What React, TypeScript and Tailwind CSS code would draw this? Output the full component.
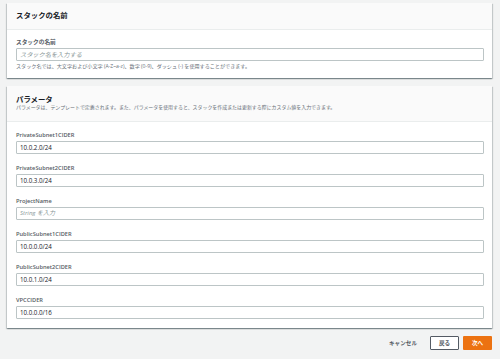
import React from 'react';

const font = { fontFamily: '"Open Sans", "Noto Sans CJK JP", sans-serif' };

type Param = { name: string; value?: string; placeholder?: string };

const params: Param[] = [
  { name: 'PrivateSubnet1CIDER', value: '10.0.2.0/24' },
  { name: 'PrivateSubnet2CIDER', value: '10.0.3.0/24' },
  { name: 'ProjectName', placeholder: 'String を入力' },
  { name: 'PublicSubnet1CIDER', value: '10.0.0.0/24' },
  { name: 'PublicSubnet2CIDER', value: '10.0.1.0/24' },
  { name: 'VPCCIDER', value: '10.0.0.0/16' },
];

function Field({ name, value, placeholder }: Param) {
  return (
    <div>
      <p className="text-[5.7px] leading-[8px] font-semibold text-[#545b64] mb-[2px]">{name}</p>
      <div className="h-[13px] border border-[#bcc5c6] rounded-[1px] bg-white flex items-center px-[3px]">
        {value ? (
          <span className="text-[6.2px] text-[#16191f]">{value}</span>
        ) : (
          <span className="text-[6px] italic text-[#879596]">{placeholder}</span>
        )}
      </div>
    </div>
  );
}

export default function App() {
  return (
    <div className="w-[500px] h-[359px] bg-[#f2f3f3] pt-[3px] overflow-hidden" style={font}>
      {/* スタック名 */}
      <section className="ml-[7px] mr-[8px] bg-white shadow-[0_1px_1px_0_rgba(0,28,36,0.3),1px_1px_1px_0_rgba(0,28,36,0.15),-1px_1px_1px_0_rgba(0,28,36,0.15)]">
        <div className="h-[27px] bg-[#fafafa] border-b border-[#eaeded] flex items-center px-[9px]">
          <h2 className="text-[7.4px] font-bold text-[#16191f]">スタックの名前</h2>
        </div>
        <div className="pl-[9px] pr-[8px] pt-[8px] pb-[8px]">
          <p className="text-[5.7px] leading-[8px] font-semibold text-[#545b64] mb-[2px]">スタックの名前</p>
          <div className="h-[13px] border border-[#bcc5c6] rounded-[1px] flex items-center px-[3px]">
            <span className="text-[6.2px] italic text-[#879596]">スタック名を入力する</span>
          </div>
          <p className="mt-[1px] text-[5.1px] leading-[8px] text-[#687078]">
            スタック名では、大文字および小文字 (A-Z~a-z)、数字 (0-9)、ダッシュ (-) を使用することができます。
          </p>
        </div>
      </section>

      {/* パラメータ */}
      <section className="mt-[8px] ml-[7px] mr-[8px] bg-white shadow-[0_1px_1px_0_rgba(0,28,36,0.3),1px_1px_1px_0_rgba(0,28,36,0.15),-1px_1px_1px_0_rgba(0,28,36,0.15)]">
        <div className="bg-[#fafafa] border-b border-[#eaeded] px-[9px] pt-[9px] pb-[10px]">
          <h2 className="text-[7.4px] leading-[9px] font-bold text-[#16191f]">パラメータ</h2>
          <p className="text-[4.95px] leading-[7px] text-[#687078]">
            パラメータは、テンプレートで定義されます。また、パラメータを使用すると、スタックを作成または更新する際にカスタム値を入力できます。
          </p>
        </div>
        <div className="pl-[9px] pr-[8px] pt-[9px] pb-[9px] flex flex-col gap-[10px]">
          {params.map((p) => (
            <Field key={p.name} {...p} />
          ))}
        </div>
      </section>

      <div className="mt-[8px] mr-[8px] flex justify-end items-center">
        <span className="text-[5.6px] font-bold text-[#545b64] mr-[13px]">キャンセル</span>
        <button className="w-[29px] h-[14px] bg-white border border-[#545b64] rounded-[1px] text-[5.6px] font-bold text-[#545b64] mr-[4px]">
          戻る
        </button>
        <button className="w-[29px] h-[14px] bg-[#ec7211] rounded-[1px] text-[5.6px] font-bold text-white">
          次へ
        </button>
      </div>
    </div>
  );
}
